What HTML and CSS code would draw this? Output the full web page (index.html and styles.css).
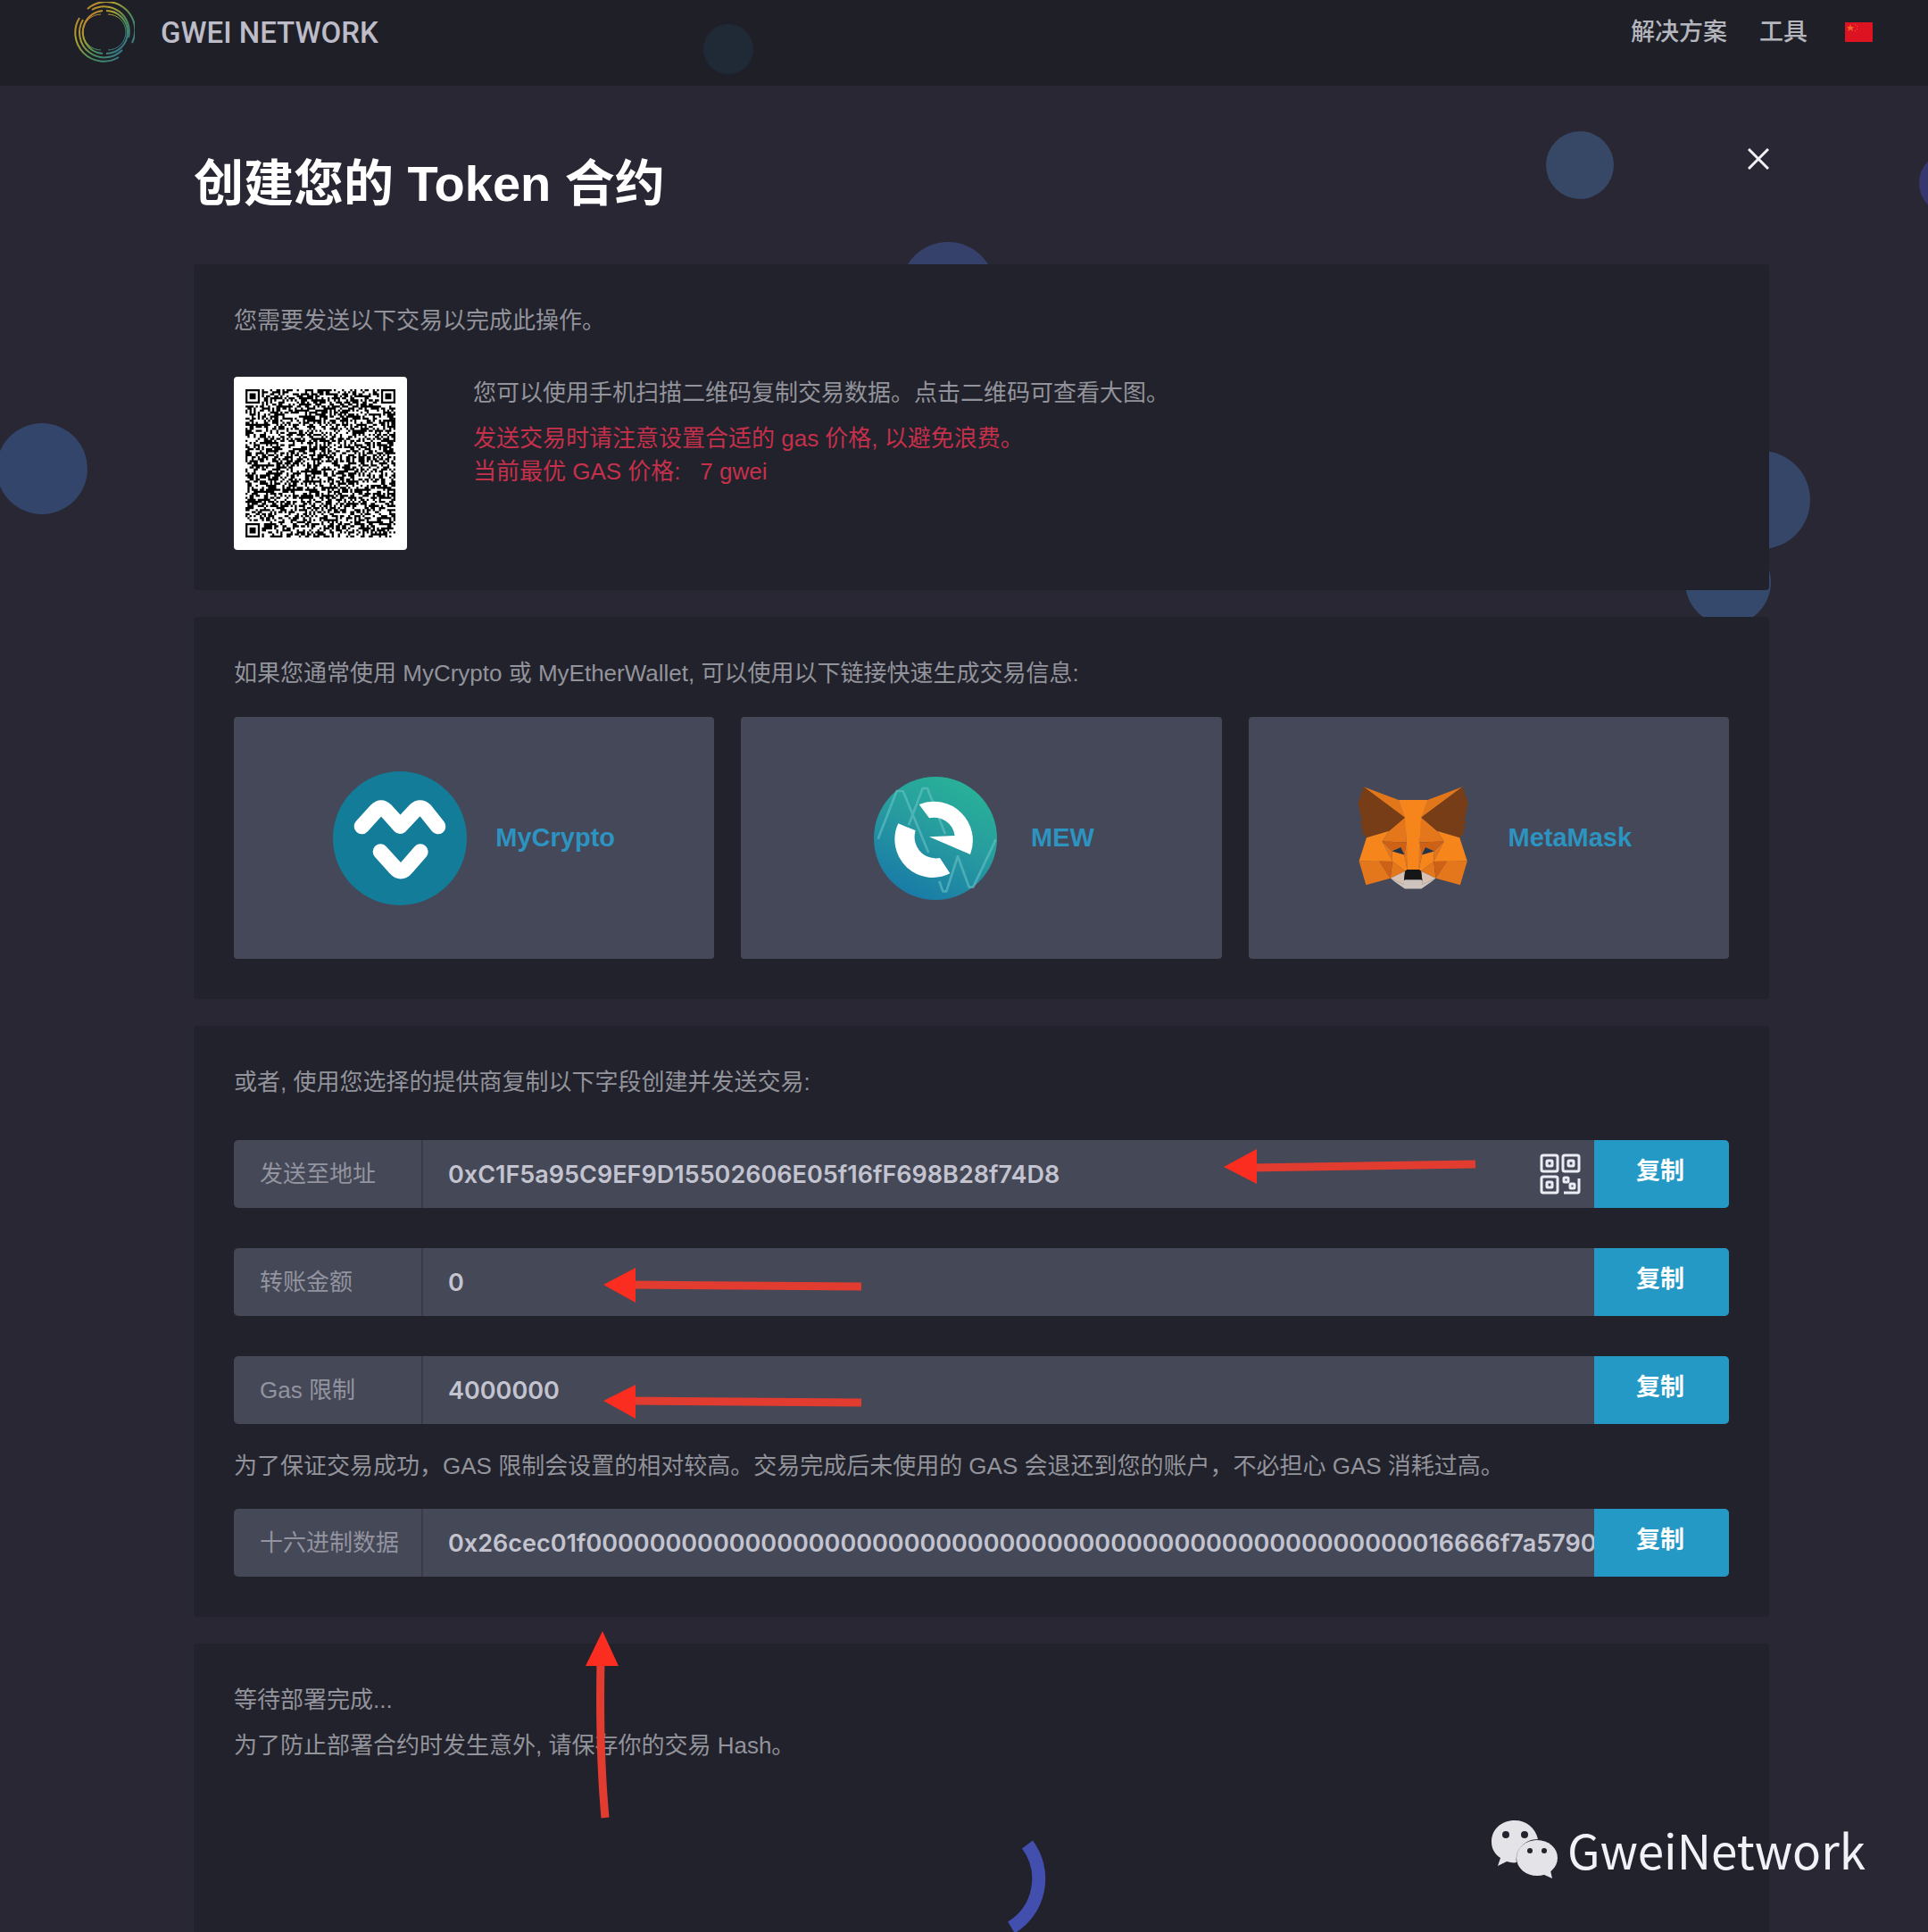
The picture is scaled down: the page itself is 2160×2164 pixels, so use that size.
FILE: index.html
```html
<!DOCTYPE html>
<html lang="zh-CN">
<head>
<meta charset="utf-8">
<meta name="viewport" content="width=device-width, initial-scale=1">
<title>GWEI NETWORK</title>
<link rel="stylesheet" href="styles.css">
</head>
<body>
<div class="page">
  <svg class="bubbles" width="2160" height="2164" viewBox="0 0 2160 2164" aria-hidden="true">
    <circle cx="1770" cy="185" r="38" fill="#374766"/>
    <circle cx="1062" cy="324" r="53" fill="#35406b"/>
    <circle cx="47" cy="525" r="51" fill="#33456a"/>
    <circle cx="1973" cy="560" r="55" fill="#354669"/>
    <circle cx="1936" cy="652" r="48" fill="#34496b"/>
    <circle cx="2185" cy="205" r="35" fill="#37376f"/>
  </svg>

  <header class="topbar">
    <svg class="topbar-bubble" width="56" height="56" viewBox="0 0 56 56" aria-hidden="true"><circle cx="28" cy="28" r="28" fill="#202a36"/></svg>
    <a class="brand" href="#">
      <svg class="brand-logo" width="68" height="68" viewBox="0 0 68 68" fill="none" stroke="url(#ring)" stroke-width="2" aria-hidden="true">
        <defs>
          <linearGradient id="ring" x1="0" y1="0" x2="1" y2="1">
            <stop offset="0" stop-color="#c8742c"/>
            <stop offset=".35" stop-color="#a8a233"/>
            <stop offset=".6" stop-color="#4c8f5c"/>
            <stop offset="1" stop-color="#2c6f9c"/>
          </linearGradient>
        </defs>
        <path d="M15 8A32 32 0 0 1 65 46M50 62A32 32 0 0 1 6 18"/>
        <path d="M20 9A28 28 0 0 1 61 40M54 54A28 28 0 0 1 10 20"/>
        <path d="M12 24A24 24 0 0 1 32 10M36 10A24 24 0 0 1 36 58M32 58A24 24 0 0 1 12 24"/>
        <path d="M30 14A20 20 0 0 0 30 54M38 14A20 20 0 0 1 38 54" stroke-width="1"/>
      </svg>
      <span class="brand-name">GWEI NETWORK</span>
    </a>
    <nav class="nav">
      <a href="#">解决方案</a>
      <a href="#">工具</a>
      <a class="flag" href="#" aria-label="中文">
        <svg width="31" height="22" viewBox="0 0 31 22" aria-hidden="true">
          <rect width="31" height="22" fill="#dd1322"/>
          <path d="M6 2l1 3h3L8 7l1 3-3-2-3 2 1-3-2-2h3z" fill="#f0642a"/>
          <path d="M11 2h1v1h-1zM13 4h1v1h-1zM13 7h1v1h-1zM11 9h1v1h-1z" fill="#f0642a"/>
        </svg>
      </a>
    </nav>
  </header>

  <main class="dialog">
    <div class="dialog-head">
      <h1>创建您的 Token 合约</h1>
      <button class="close" type="button" aria-label="关闭">
        <svg width="24" height="24" viewBox="0 0 24 24" stroke="#f1f1f6" stroke-width="3" aria-hidden="true"><path d="M1 1l22 22M23 1L1 23"/></svg>
      </button>
    </div>

    <section class="card">
      <p>您需要发送以下交易以完成此操作。</p>
      <div class="scan">
        <button class="qr" type="button" aria-label="查看二维码大图">
          <svg width="168" height="166" viewBox="0 0 73 73" preserveAspectRatio="none" aria-hidden="true"><path id="qr-modules" d=""/></svg>
        </button>
        <div class="scan-text">
          <p>您可以使用手机扫描二维码复制交易数据。点击二维码可查看大图。</p>
          <p class="warning">发送交易时请注意设置合适的 gas 价格, 以避免浪费。<br>当前最优 GAS 价格:&nbsp;&nbsp; 7 gwei</p>
        </div>
      </div>
    </section>

    <section class="card">
      <p>如果您通常使用 MyCrypto 或 MyEtherWallet, 可以使用以下链接快速生成交易信息:</p>
      <div class="wallets">
        <a class="wallet" href="#">
          <svg width="150" height="150" viewBox="92 72 450 450" aria-hidden="true">
            <circle cx="317" cy="297" r="225" fill="#137c99"/>
            <g fill="none" stroke="#fff" stroke-width="52" stroke-linecap="round" stroke-linejoin="round">
              <path d="M189 257L238 203Q254 186 270 203L318 256L368 203Q385 186 402 203L445 257"/>
              <path d="M252 342L302 397Q320 418 338 397L386 342"/>
            </g>
          </svg>
          <span>MyCrypto</span>
        </a>
        <a class="wallet" href="#">
          <svg width="150" height="150" viewBox="108 71 450 450" aria-hidden="true">
            <defs>
              <linearGradient id="mew" x1=".75" y1="0" x2=".25" y2="1">
                <stop offset="0" stop-color="#28b397"/>
                <stop offset=".45" stop-color="#279c9f"/>
                <stop offset="1" stop-color="#1878a8"/>
              </linearGradient>
            </defs>
            <circle cx="333" cy="296" r="207" fill="url(#mew)"/>
            <g fill="none" stroke="#67c3c5" stroke-opacity=".6" stroke-width="8" stroke-linejoin="round">
              <path d="M140 298L203 137H224L310 345M243 252L290 128H306L366 282"/>
              <path d="M346 440L358 474H370L408 356L446 460H460L536 300"/>
            </g>
            <path fill="#fff" d="M278 182A131 131 0 0 1 450 350L312 291L398 287A70 70 0 0 0 312 228ZM208 246L266 270A72 72 0 0 0 348 362L382 414A128 128 0 0 1 208 246Z"/>
          </svg>
          <span>MEW</span>
        </a>
        <a class="wallet" href="#">
          <svg width="150" height="115" viewBox="31 35 256 238" aria-hidden="true">
            <path fill="#e2761b" d="M274 35.500l-99.500 73.900 18.400-43.600zM44.400 35.500l98.700 74.600-17.500-44.300z"/>
            <path fill="#e4761b" d="M238.300 206.800l-26.500 40.600 56.700 15.600 16.300-55.300zM33.900 207.700L50.100 263l56.700-15.600-26.500-40.600zM103.600 138.200l-15.800 23.900 56.300 2.500-2-60.500zM214.900 138.200l-39-34.800-1.300 61.200 56.200-2.500zM106.800 247.400l33.800-16.500-29.200-22.800zM177.900 230.900l33.900 16.500-4.700-39.300z"/>
            <path fill="#d7c1b3" d="M211.800 247.400l-33.900-16.500 2.700 22.100-.3 9.300zM106.800 247.400l31.500 14.900-.2-9.300 2.500-22.100z"/>
            <path fill="#cd6116" d="M106.800 247.400l4.800-40.600-31.300.9zM207 206.800l4.800 40.600 26.500-39.700zM230.800 162.100l-56.200 2.500 5.200 28.900 8.300-17.400 20 9.100zM110.600 185.200l20-9.100 8.200 17.400 5.300-28.900-56.300-2.500z"/>
            <path fill="#233447" d="M138.800 193.500l-28.200-8.300 19.900-9.100zM179.700 193.500l8.300-17.400 20 9.100z"/>
            <path fill="#e4751f" d="M87.800 162.100l23.600 46-.8-22.900zM208.100 185.200l-1 22.900 23.700-46zM144.100 164.600l-5.300 28.900 6.600 34.100 1.500-44.900zM174.600 164.600l-2.700 18 1.200 45 6.700-34.100z"/>
            <path fill="#f6851b" d="M179.800 193.500l-6.700 34.100 4.800 3.300 29.200-22.800 1-22.900zM110.600 185.200l.8 22.900 29.200 22.800 4.800-3.300-6.600-34.100z"/>
            <path fill="#cfc4bd" d="M180.300 262.300l.3-9.300-2.500-2.200h-37.700l-2.300 2.200.2 9.300-31.500-14.900 11 9 22.300 15.500h38.300l22.400-15.500 11-9z"/>
            <path fill="#161616" d="M177.900 230.900l-4.800-3.300h-27.700l-4.800 3.300-2.500 22.100 2.300-2.200h37.700l2.500 2.200z"/>
            <path fill="#763d16" d="M278.300 114.200l8.500-40.800-12.700-37.900-96.200 71.400 37 31.300 52.300 15.300 11.600-13.500-5-3.600 8-7.300-6.200-4.800 8-6.100zM31.800 73.400l8.500 40.800-5.400 4 8 6.100-6.100 4.800 8 7.300-5 3.600 11.500 13.500 52.300-15.300 37-31.300-96.200-71.400z"/>
            <path fill="#f6851b" d="M267.200 153.500l-52.300-15.300 15.900 23.900-23.700 46 31.200-.4h46.500zM103.600 138.200l-52.300 15.300-17.400 54.200h46.400l31.100.4-23.600-46zM174.600 164.600l3.300-57.700 15.200-41.100h-67.500l15 41.100 3.500 57.700 1.200 18.200.1 44.800h27.700l.2-44.800z"/>
          </svg>
          <span>MetaMask</span>
        </a>
      </div>
    </section>

    <section class="card">
      <p>或者, 使用您选择的提供商复制以下字段创建并发送交易:</p>
      <form class="fields">
        <div class="field">
          <label for="to">发送至地址</label>
          <input id="to" type="text" readonly value="0xC1F5a95C9EF9D15502606E05f16fF698B28f74D8">
          <button class="field-qr" type="button" aria-label="二维码">
            <svg width="46" height="46" viewBox="0 0 46 46" fill="none" stroke="#ececf4" stroke-width="3" aria-hidden="true">
              <rect x="2" y="2" width="18" height="18" rx="2"/><rect x="8" y="8" width="6" height="6" rx="1"/>
              <rect x="26" y="2" width="18" height="18" rx="2"/><rect x="32" y="8" width="6" height="6" rx="1"/>
              <rect x="2" y="26" width="18" height="18" rx="2"/><rect x="8" y="32" width="6" height="6" rx="1"/>
              <rect x="27" y="27" width="5" height="5" rx="1"/><rect x="34" y="34" width="5" height="5" rx="1"/>
              <path d="M44 28V42Q44 44 42 44H27"/>
            </svg>
          </button>
          <button class="copy" type="button">复制</button>
        </div>
        <div class="field">
          <label for="amount">转账金额</label>
          <input id="amount" type="text" readonly value="0">
          <button class="copy" type="button">复制</button>
        </div>
        <div class="field-group">
          <div class="field">
            <label for="gas">Gas 限制</label>
            <input id="gas" type="text" readonly value="4000000">
            <button class="copy" type="button">复制</button>
          </div>
          <p>为了保证交易成功，GAS 限制会设置的相对较高。交易完成后未使用的 GAS 会退还到您的账户，不必担心 GAS 消耗过高。</p>
          <div class="field">
            <label for="data">十六进制数据</label>
            <input id="data" type="text" readonly value="0x26cec01f0000000000000000000000000000000000000000000000000000016666f7a57900">
            <button class="copy" type="button">复制</button>
          </div>
        </div>
      </form>
    </section>

    <section class="card card-wait">
      <p>等待部署完成...</p>
      <p>为了防止部署合约时发生意外, 请保存你的交易 Hash。</p>
      <svg class="spinner" width="146" height="146" viewBox="0 0 146 146" fill="none" stroke="#434fae" stroke-width="15" role="img" aria-label="加载中"><path d="M124 35A64 64 0 0 1 106 128"/></svg>
    </section>
  </main>

  <svg class="arrows" width="2160" height="2164" viewBox="0 0 2160 2164" aria-hidden="true">
    <g fill="none" stroke="#e23b30" stroke-width="9">
      <path d="M1400 1308L1653 1304"/>
      <path d="M704 1439L965 1441"/>
      <path d="M704 1569L965 1571"/>
      <path d="M673 1860Q671 1960 678 2036"/>
    </g>
    <path fill="#fb2c20" d="M1371 1307l37-20v39zM676 1439l36-19v39zM676 1569l36-18v38zM675 1827l18 39h-37z"/>
  </svg>

  <div class="watermark">
    <svg width="76" height="66" viewBox="0 0 76 66" aria-hidden="true">
      <path fill="#e4e4e8" d="M27 1C12 1 1 11 1 25c0 8 4 14 10 18l-3 9 10-5c4 1 8 2 11 1C27 33 39 22 53 22 50 9 40 1 27 1z"/>
      <ellipse cx="52" cy="43" rx="23" ry="20" fill="#e4e4e8"/>
      <path fill="#e4e4e8" d="M58 61l11 5-2-9z"/>
      <g fill="#22232c"><circle cx="17" cy="17" r="4"/><circle cx="38" cy="17" r="4"/><circle cx="44" cy="35" r="3"/><circle cx="60" cy="35" r="3"/></g>
    </svg>
    <span>GweiNetwork</span>
  </div>
</div>
<script src="qr.js"></script>
</body>
</html>
```
FILE: styles.css
```css
* {
  box-sizing: border-box;
}

body {
  margin: 0;
  background: #282733;
  color: #93939b;
  font-family: "Liberation Sans", "Noto Sans CJK SC", sans-serif;
  font-size: 26px;
  line-height: 37px;
}

h1,
p {
  margin: 0;
}

a {
  color: inherit;
  text-decoration: none;
}

button,
input {
  border: 0;
  margin: 0;
  padding: 0;
  background: none;
  font: inherit;
  color: inherit;
}

button {
  cursor: pointer;
}

svg {
  display: block;
  flex: none;
}

.page {
  position: relative;
  overflow: hidden;
  height: 100vh;
}

.bubbles,
.arrows {
  position: absolute;
  top: 0;
  left: 0;
}

.arrows {
  pointer-events: none;
}

/* Top bar */

.topbar {
  position: relative;
  display: flex;
  align-items: center;
  justify-content: space-between;
  height: 96px;
  padding: 0 62px 24px 83px;
  background: #1f2027;
}

.topbar-bubble {
  position: absolute;
  top: 27px;
  left: 788px;
}

.brand {
  display: flex;
  align-items: center;
  gap: 29px;
}

.brand-name {
  font: 500 33px/37px Roboto, sans-serif;
  color: #bdbcc8;
}

.nav {
  display: flex;
  align-items: center;
  gap: 36px;
  font-size: 27px;
  font-weight: 500;
  color: #b5b5be;
}

.flag {
  margin-left: 6px;
}

/* Dialog */

.dialog {
  position: relative;
  display: flex;
  flex-direction: column;
  gap: 30px;
  margin: 0 178px 0 217px;
}

.dialog-head {
  display: flex;
  justify-content: space-between;
  align-items: flex-start;
  padding-top: 70px;
}

h1 {
  font-size: 56px;
  line-height: 80px;
  font-weight: 700;
  color: #fff;
}

.card {
  padding: 45px;
  border-radius: 4px;
  background: #21222b;
}

.dialog-head + .card {
  margin-top: 20px;
}

.scan {
  display: flex;
  gap: 74px;
  margin-top: 44px;
}

.qr {
  display: flex;
  justify-content: center;
  align-items: center;
  width: 194px;
  height: 194px;
  border-radius: 4px;
  background: #fff;
}

.warning {
  margin-top: 14px;
  color: #c5304b;
}

.wallets {
  display: grid;
  grid-template-columns: repeat(3, 1fr);
  gap: 30px;
  margin-top: 30px;
}

.wallet {
  display: flex;
  justify-content: center;
  align-items: center;
  gap: 32px;
  height: 271px;
  border-radius: 4px;
  background: #444858;
  color: #2d93c0;
  font-size: 29px;
  font-weight: 700;
}

/* Copyable fields */

.fields {
  display: grid;
  gap: 45px;
  margin-top: 46px;
}

.field-group {
  display: grid;
  gap: 29px;
}

.field {
  display: flex;
  height: 76px;
  border-radius: 5px;
  overflow: hidden;
  background: #454856;
}

.field label {
  flex: none;
  width: 212px;
  padding: 20px 0 0 29px;
  border-right: 2px solid #393b4a;
  color: #9394a0;
}

.field input {
  flex: 1;
  min-width: 0;
  padding-left: 28px;
  outline: 0;
  font: 600 27px/37px Inter, sans-serif;
  color: #c3c4d0;
}

.field-qr {
  padding: 0 15px;
}

.copy {
  flex: none;
  width: 151px;
  padding: 0 3px 6px 0;
  background: #2599c6;
  color: #fff;
  font-size: 27px;
  font-weight: 700;
}

.card-wait p + p {
  margin-top: 14px;
}

.spinner {
  margin: 57px auto 0;
}

.watermark {
  position: absolute;
  right: 70px;
  bottom: 57px;
  display: flex;
  align-items: center;
  gap: 10px;
  color: #f1f1f8;
  font: 400 53px/72px "Noto Sans CJK SC", sans-serif;
}
```
FILE: qr.js
```js
// Fills the payment code: finder squares in three corners, data modules elsewhere.
(function () {
  var size = 73;
  var seed = 20191;
  var d = "";

  function random() {
    seed = (seed * 1103515245 + 12345) % 2147483648;
    return seed / 2147483648;
  }

  function finder(x, y, ox, oy) {
    var dx = x - ox, dy = y - oy;
    if (dx < -1 || dy < -1 || dx > 7 || dy > 7) return null;
    var ring = Math.max(Math.abs(dx - 3), Math.abs(dy - 3));
    return ring === 3 || ring <= 1;
  }

  for (var y = 0; y < size; y++) {
    for (var x = 0; x < size; x++) {
      var on = finder(x, y, 0, 0);
      if (on === null) on = finder(x, y, size - 7, 0);
      if (on === null) on = finder(x, y, 0, size - 7);
      if (on === null) on = random() < 0.5;
      if (on) d += "M" + x + " " + y + "h1v1h-1z";
    }
  }
  document.getElementById("qr-modules").setAttribute("d", d);
})();
```
